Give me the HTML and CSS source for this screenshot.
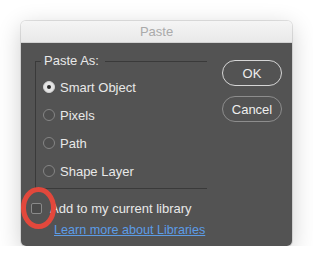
FILE: index.html
```html
<!DOCTYPE html>
<html>
<head>
<meta charset="utf-8">
<link rel="stylesheet" href="styles.css">
</head>
<body>
<div class="window">
  <div class="titlebar">Paste</div>
  <div class="content">
    <div class="top">
      <fieldset class="group">
        <legend class="legend">Paste As:</legend>
        <label class="option"><span class="radio checked"></span>Smart Object</label>
        <label class="option"><span class="radio"></span>Pixels</label>
        <label class="option"><span class="radio"></span>Path</label>
        <label class="option"><span class="radio"></span>Shape Layer</label>
      </fieldset>
      <div class="buttons">
        <button class="btn btn-default">OK</button>
        <button class="btn">Cancel</button>
      </div>
    </div>
    <label class="check-row"><span class="checkbox"></span>Add to my current library</label>
    <a class="link" href="#">Learn more about Libraries</a>
  </div>
  <svg class="highlight" width="44" height="50" viewBox="0 0 44 50">
    <ellipse cx="19.5" cy="23" rx="15" ry="18.5" fill="none" stroke="#e2483c" stroke-width="5"/>
  </svg>
</div>
</body>
</html>
```
FILE: styles.css
```css
html, body {
  margin: 0;
  padding: 0;
  background: #ffffff;
}
body {
  font-family: "Liberation Sans", Arial, sans-serif;
  font-size: 13px;
  padding: 21px 0 0 21px;
}
.window {
  position: relative;
  width: 271px;
  height: 225px;
  border-radius: 5px;
  box-shadow: 0 6px 24px rgba(0, 0, 0, 0.2), 0 0 0 1px rgba(0, 0, 0, 0.1);
}
.titlebar {
  height: 22px;
  line-height: 22px;
  box-sizing: border-box;
  text-align: center;
  color: #aaaaaa;
  background: linear-gradient(#f5f5f5, #e9e9e9);
  border-bottom: 1px solid #d2d2d2;
  border-radius: 5px 5px 0 0;
}
.content {
  box-sizing: border-box;
  height: 203px;
  background: #535353;
  border-radius: 0 0 5px 5px;
  padding: 10px 10px 0 10px;
  color: #e8e8e8;
  display: flex;
  flex-direction: column;
}
.top {
  display: flex;
  justify-content: space-between;
}
.group {
  box-sizing: border-box;
  width: 172px;
  height: 136px;
  margin: 0 0 0 4px;
  padding: 4px 0 3px 7px;
  border: 1px solid #3a3a3a;
  border-right: none;
  min-width: 0;
}
.legend {
  padding: 0 6px 0 3px;
  margin-left: -2px;
  line-height: 16px;
  color: #e8e8e8;
}
.option {
  display: flex;
  align-items: center;
  height: 28px;
}
.radio {
  box-sizing: border-box;
  width: 12px;
  height: 12px;
  border-radius: 50%;
  border: 1px solid #858585;
  background: #4f4f4f;
  margin-right: 5px;
  display: flex;
  align-items: center;
  justify-content: center;
}
.radio.checked {
  background: #e4e4e4;
  border-color: #d0d0d0;
}
.radio.checked::after {
  content: "";
  width: 4px;
  height: 4px;
  border-radius: 50%;
  background: #2b2b2b;
}
.buttons {
  display: flex;
  flex-direction: column;
  gap: 10px;
  margin-top: 7px;
}
.btn {
  box-sizing: border-box;
  width: 60px;
  height: 26px;
  border-radius: 13px;
  border: 1px solid #8d8d8d;
  background: #535353;
  color: #eeeeee;
  font-family: "Liberation Sans", Arial, sans-serif;
  font-size: 13px;
  padding: 0;
}
.btn-default {
  border-color: #d6d6d6;
}
.check-row {
  display: flex;
  align-items: center;
  height: 16px;
  margin-top: 11px;
}
.checkbox {
  box-sizing: border-box;
  width: 11px;
  height: 11px;
  border: 1px solid #8a8a8a;
  border-radius: 2px;
  background: #4a4a4a;
  margin-right: 8px;
}
.link {
  display: block;
  font-size: 12.6px;
  line-height: 16px;
  margin: 6px 0 0 23px;
  color: #5c9ce6;
  text-decoration: underline;
  align-self: flex-start;
}
.highlight {
  position: absolute;
  left: -2px;
  top: 164px;
}
```
